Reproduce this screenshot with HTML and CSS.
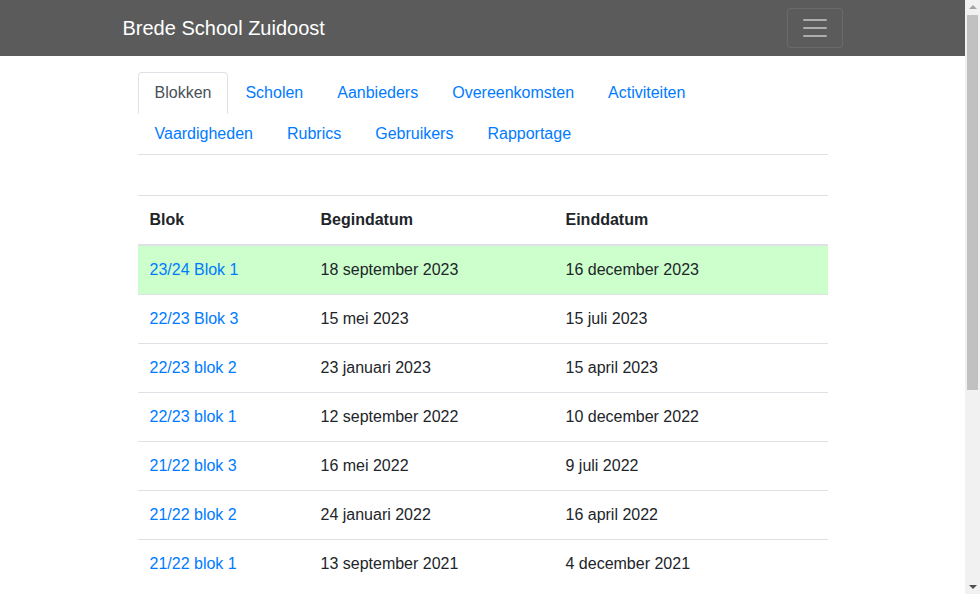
FILE: index.html
```html
<!DOCTYPE html>
<html lang="nl">
<head>
<meta charset="utf-8">
<title>Blokken - Brede School Zuidoost</title>
<link rel="stylesheet" href="styles.css">
</head>
<body>
<div class="page">
<nav class="navbar">
  <div class="container nav-inner">
    <a class="brand" href="#">Brede School Zuidoost</a>
    <button class="toggler" type="button" aria-label="Menu">
      <svg class="toggler-icon" width="30" height="30" viewBox="0 0 30 30"><path stroke="rgba(255,255,255,0.5)" stroke-width="2" stroke-linecap="round" d="M4 7h22M4 15h22M4 23h22"/></svg>
    </button>
  </div>
</nav>
<main class="container content">
  <ul class="tabs">
    <li class="tab-item"><a class="tab-link active" href="#">Blokken</a></li>
    <li class="tab-item"><a class="tab-link" href="#">Scholen</a></li>
    <li class="tab-item"><a class="tab-link" href="#">Aanbieders</a></li>
    <li class="tab-item"><a class="tab-link" href="#">Overeenkomsten</a></li>
    <li class="tab-item"><a class="tab-link" href="#">Activiteiten</a></li>
    <li class="tab-item"><a class="tab-link" href="#">Vaardigheden</a></li>
    <li class="tab-item"><a class="tab-link" href="#">Rubrics</a></li>
    <li class="tab-item"><a class="tab-link" href="#">Gebruikers</a></li>
    <li class="tab-item"><a class="tab-link" href="#">Rapportage</a></li>
  </ul>
  <table class="table">
    <thead>
      <tr><th class="c1">Blok</th><th class="c2">Begindatum</th><th class="c3">Einddatum</th></tr>
    </thead>
    <tbody>
      <tr class="current"><td><a href="#">23/24 Blok 1</a></td><td>18 september 2023</td><td>16 december 2023</td></tr>
      <tr><td><a href="#">22/23 Blok 3</a></td><td>15 mei 2023</td><td>15 juli 2023</td></tr>
      <tr><td><a href="#">22/23 blok 2</a></td><td>23 januari 2023</td><td>15 april 2023</td></tr>
      <tr><td><a href="#">22/23 blok 1</a></td><td>12 september 2022</td><td>10 december 2022</td></tr>
      <tr><td><a href="#">21/22 blok 3</a></td><td>16 mei 2022</td><td>9 juli 2022</td></tr>
      <tr><td><a href="#">21/22 blok 2</a></td><td>24 januari 2022</td><td>16 april 2022</td></tr>
      <tr><td><a href="#">21/22 blok 1</a></td><td>13 september 2021</td><td>4 december 2021</td></tr>
    </tbody>
  </table>
</main>
</div>
<div class="scrollbar" aria-hidden="true">
  <div class="sb-btn"><span class="arrow-up"></span></div>
  <div class="sb-track"><div class="sb-thumb"></div></div>
  <div class="sb-btn"><span class="arrow-down"></span></div>
</div>
</body>
</html>
```
FILE: styles.css
```css
* { box-sizing: border-box; }
html, body { margin: 0; padding: 0; }
body {
  display: flex;
  height: 100vh;
  overflow: hidden;
  font-family: "Liberation Sans", Arial, sans-serif;
  font-size: 16px;
  line-height: 24px;
  color: #212529;
  background: #fff;
}
a { color: #007bff; text-decoration: none; }

.page {
  flex: 1;
  min-width: 0;
  overflow: hidden;
}

.scrollbar {
  width: 15px;
  flex: none;
  display: flex;
  flex-direction: column;
  background: #f1f1f1;
}
.sb-btn {
  height: 15px;
  flex: none;
  display: flex;
  align-items: center;
  justify-content: center;
}
.arrow-up {
  width: 0;
  height: 0;
  border-left: 4px solid transparent;
  border-right: 4px solid transparent;
  border-bottom: 4px solid #a3a3a3;
  margin-top: -1px;
}
.arrow-down {
  width: 0;
  height: 0;
  border-left: 4px solid transparent;
  border-right: 4px solid transparent;
  border-top: 4px solid #505050;
  margin-top: 1px;
}
.sb-track {
  flex: 1;
}
.sb-thumb {
  height: 375px;
  margin: 0 2px;
  background: #c1c1c1;
}

.container {
  width: 720px;
  margin: 0 auto;
}

.navbar {
  background: #5b5b5b;
  padding: 8px 0;
}
.nav-inner {
  display: flex;
  align-items: center;
  justify-content: space-between;
}
.brand {
  color: #fff;
  font-size: 20px;
  line-height: 30px;
  padding: 5px 0;
}
.toggler {
  width: 56px;
  height: 40px;
  padding: 4px 12px;
  background: transparent;
  border: 1px solid rgba(255,255,255,0.1);
  border-radius: 4px;
  display: flex;
  align-items: center;
  justify-content: center;
}
.toggler-icon { display: block; }

.content {
  padding: 16px 15px 0;
}

.tabs {
  list-style: none;
  margin: 0 0 40px;
  padding: 0;
  display: flex;
  flex-wrap: wrap;
  border-bottom: 1px solid #dee2e6;
}
.tab-item { margin-bottom: -1px; }
.tab-link {
  display: block;
  padding: 8px 16px;
  border: 1px solid transparent;
  border-top-left-radius: 4px;
  border-top-right-radius: 4px;
}
.tab-link.active {
  color: #495057;
  background: #fff;
  border-color: #dee2e6 #dee2e6 #fff;
}

.table {
  width: 100%;
  border-collapse: collapse;
  margin-bottom: 16px;
}
.table th, .table td {
  padding: 12px;
  text-align: left;
  vertical-align: top;
  border-top: 1px solid #dee2e6;
}
.table th { font-weight: bold; border-bottom: 2px solid #dee2e6; }
.c1 { width: 171px; }
.c2 { width: 245px; }
.table tr.current td { background: #ccffcc; }
```
